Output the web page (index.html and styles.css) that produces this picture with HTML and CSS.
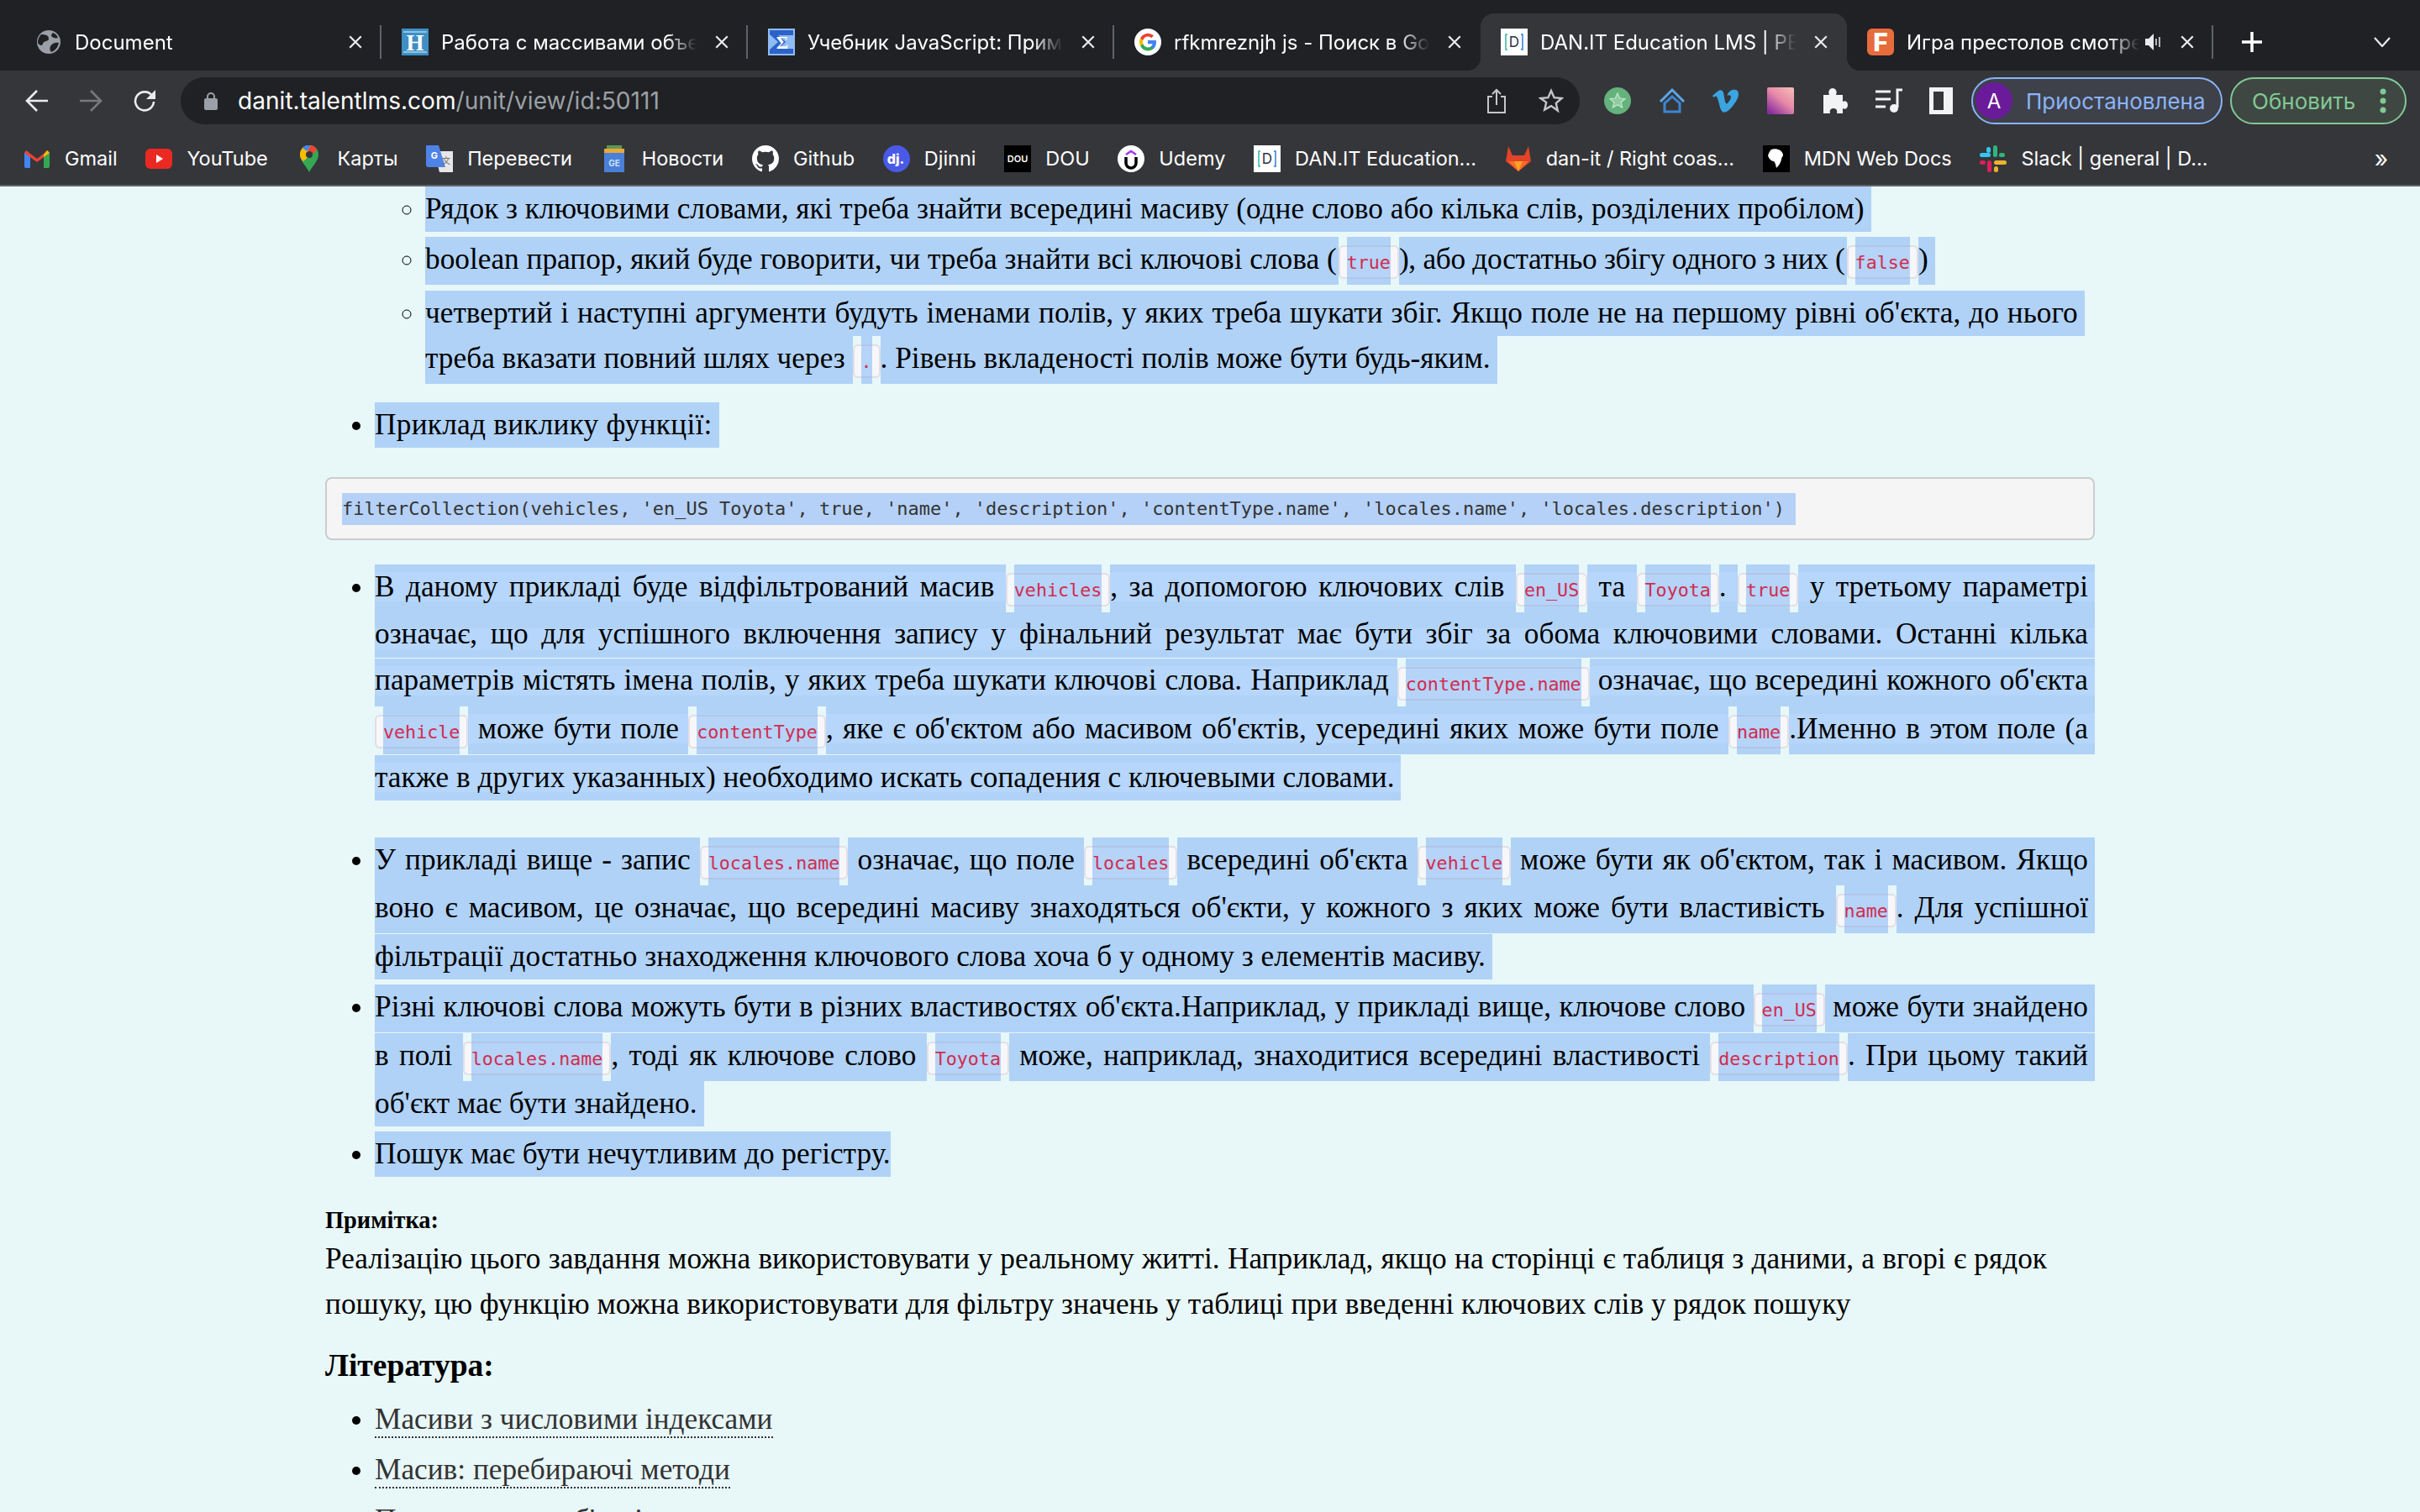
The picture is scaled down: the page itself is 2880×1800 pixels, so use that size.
FILE: index.html
```html
<!DOCTYPE html>
<html lang="uk">
<head>
<meta charset="utf-8">
<title>DAN.IT Education LMS</title>
<link rel="stylesheet" href="styles.css">
</head>
<body>
<svg class="defs" width="0" height="0" aria-hidden="true">
  <symbol id="close" viewBox="0 0 16 16"><path d="M2 2l12 12M14 2L2 14" fill="none" stroke="#e8eaed" stroke-width="2"/></symbol>
  <symbol id="dan" viewBox="0 0 32 32"><rect width="32" height="32" fill="#fff"/><path d="M8 7H6v18h2" fill="none" stroke="#2fb8a8" stroke-width="1.5"/><path d="M24 7h2v18h-2" fill="none" stroke="#2f7de1" stroke-width="1.5"/><text x="16" y="22" text-anchor="middle" font-family="Inter" font-size="17" fill="#2a3244">D</text></symbol>
</svg>
<header class="chrome">
  <div class="tabstrip">
    <div class="tab">
      <svg class="fav" viewBox="0 0 32 32"><circle cx="16" cy="16" r="14" fill="#9aa0a6"/><path d="M7 7c5 0 9 1 9 5s-6 2-7 6-5 1-6-1c0-4 1-7 4-10zM18 21c2-3 5-5 10-4-1 5-4 9-9 11-2-2-2-5-1-7zM21 5c3 1 5 3 6 6-3 1-6 0-8-2 0-2 1-3 2-4z" fill="#202124"/></svg>
      <span class="tab-title">Document</span>
      <svg class="tab-x"><use href="#close"/></svg>
    </div>
    <div class="tab">
      <svg class="fav" viewBox="0 0 32 32"><rect width="32" height="32" fill="#3f8fc4"/><path d="M2 4h28M2 28h28" stroke="#8cc4e6" stroke-width="2"/><text x="16" y="26" text-anchor="middle" font-family="Liberation Serif" font-weight="700" font-size="27" fill="#fff">H</text></svg>
      <span class="tab-title">Работа с массивами объекто</span>
      <svg class="tab-x"><use href="#close"/></svg>
    </div>
    <div class="tab">
      <svg class="fav" viewBox="0 0 32 32"><rect width="32" height="32" fill="#8fbcf2"/><path d="M2 2h28v6H12l9 8-9 8h18v6H2v-5l10-9L2 7z" fill="#2d63c8"/><text x="17" y="24" text-anchor="middle" font-family="Liberation Serif" font-weight="700" font-size="22" fill="#fff">Σ</text></svg>
      <span class="tab-title">Учебник JavaScript: Примеры</span>
      <svg class="tab-x"><use href="#close"/></svg>
    </div>
    <div class="tab tab-before-active">
      <svg class="fav" viewBox="0 0 32 32"><circle cx="16" cy="16" r="16" fill="#fff"/><path d="M26 16.3c0-.8-.1-1.500-.2-2.200H16v4.200h5.600a4.800 4.800 0 0 1-2.100 3.100v2.600h3.400c2-1.800 3.100-4.500 3.100-7.700z" fill="#4285f4"/><path d="M16 26.500c2.800 0 5.200-.9 6.900-2.500l-3.400-2.600c-.9.600-2.100 1-3.500 1-2.700 0-5-1.800-5.800-4.300H7.100v2.700A10.500 10.500 0 0 0 16 26.500z" fill="#34a853"/><path d="M10.200 18.100a6.300 6.300 0 0 1 0-4.100v-2.700H7.100a10.500 10.500 0 0 0 0 9.500z" fill="#fbbc05"/><path d="M16 9.600c1.500 0 2.900.5 4 1.600l3-3A10.500 10.500 0 0 0 7.100 11.300l3.100 2.700c.8-2.500 3.100-4.400 5.800-4.400z" fill="#ea4335"/></svg>
      <span class="tab-title">rfkmreznjh js - Поиск в Google</span>
      <svg class="tab-x"><use href="#close"/></svg>
    </div>
    <div class="tab tab-active">
      <svg class="fav"><use href="#dan"/></svg>
      <span class="tab-title">DAN.IT Education LMS | PE Adva</span>
      <svg class="tab-x"><use href="#close"/></svg>
    </div>
    <div class="tab">
      <svg class="fav" viewBox="0 0 32 32"><rect width="32" height="32" rx="6" fill="#e66c3c"/><text x="16" y="27" text-anchor="middle" font-family="Inter" font-weight="800" font-size="30" fill="#fff">F</text></svg>
      <span class="tab-title">Игра престолов смотреть</span>
      <svg class="speaker" viewBox="0 0 20 24"><path d="M1 8h4l6-6v20l-6-6H1z" fill="#e8eaed"/><path d="M14 8v8M18 6v12" stroke="#e8eaed" stroke-width="1.500"/></svg>
      <svg class="tab-x"><use href="#close"/></svg>
    </div>
    <svg class="newtab" viewBox="0 0 24 24"><path d="M12 0v24M0 12h24" stroke="#fff" stroke-width="3.500"/></svg>
    <svg class="tabchev" viewBox="0 0 20 12"><path d="M1 1l9 10 9-10" fill="none" stroke="#e8eaed" stroke-width="2.200"/></svg>
  </div>

  <div class="toolbar">
    <svg class="nav" viewBox="0 0 28 26"><path d="M27 13H3M14 1L2 13l12 12" fill="none" stroke="#e8eaed" stroke-width="2.600"/></svg>
    <svg class="nav" viewBox="0 0 28 26"><path d="M1 13h24M14 1l12 12-12 12" fill="none" stroke="#77797c" stroke-width="2.600"/></svg>
    <svg class="nav" viewBox="0 0 28 26"><path d="M23 7a11 11 0 1 0 2 7" fill="none" stroke="#e8eaed" stroke-width="2.600"/><path d="M27 0v11H16z" fill="#e8eaed"/></svg>
    <div class="omni">
      <svg class="lock" viewBox="0 0 16 22"><path d="M4 9V6a4 4 0 0 1 8 0v3" fill="none" stroke="#9aa0a6" stroke-width="2"/><rect y="8" width="16" height="14" rx="2" fill="#9aa0a6"/></svg>
      <span class="url"><span class="url-host">danit.talentlms.com</span>/unit/view/id:50111</span>
      <svg class="omni-share" viewBox="0 0 24 30"><path d="M7 10H2v19h20V10h-5M12 20V2M7 7l5-5 5 5" fill="none" stroke="#c4c7ca" stroke-width="2"/></svg>
      <svg class="omni-star" viewBox="0 0 30 30"><path d="M15 3l3.600 8.200 8.900.8-6.700 5.900 2 8.700L15 21.100l-7.800 4.500 2-8.700L2.500 12l8.900-.8z" fill="none" stroke="#c4c7ca" stroke-width="2.400"/></svg>
    </div>
    <div class="exts">
      <svg class="ext" viewBox="0 0 32 32"><circle cx="16" cy="16" r="16" fill="#64b27c"/><path d="M16 7l2.700 6 6.300.6-4.800 4.200 1.500 6.200-5.700-3.300L10.300 24l1.500-6.200L7 13.600l6.300-.6z" fill="#8ecb9f" stroke="#c7e6cf" stroke-width="1.200"/></svg>
      <svg class="ext" viewBox="0 0 32 32"><path d="M2 17L16 3l14 14" fill="none" stroke="#5aa7ea" stroke-width="3"/><path d="M7 29V19l9-8 9 8v10z" fill="none" stroke="#3d86d0" stroke-width="3"/></svg>
      <svg class="ext" viewBox="0 0 32 32"><path d="M31 9c-.2 3-2.300 7.200-6.400 12.500C20.400 27 16.800 29.700 13.900 29.700c-1.800 0-3.400-1.700-4.600-5l-2.500-9.200C5.900 12.200 4.900 10.500 3.900 10.500c-.2 0-1 .5-2.400 1.400L0 10c1.500-1.300 3-2.700 4.500-4C6.500 4.300 8 3.300 9 3.200c2.400-.2 3.900 1.400 4.400 4.800.6 3.700 1 6 1.200 6.900.7 3.100 1.500 4.600 2.300 4.600.6 0 1.600-1 2.900-3 1.300-2 2-3.600 2.100-4.600.2-1.700-.5-2.600-2.100-2.600-.7 0-1.500.2-2.300.5C19 4.900 22 2.700 26.400 2.800c3.300.1 4.800 2.200 4.600 6.200z" fill="#3aa5e0"/></svg>
      <svg class="ext" viewBox="0 0 32 32"><defs><linearGradient id="pk" x1="1" y1="0" x2="0.200" y2="1"><stop offset="0" stop-color="#f5c0b8"/><stop offset=".5" stop-color="#e88aa8"/><stop offset="1" stop-color="#8a2fa0"/></linearGradient></defs><rect width="32" height="32" rx="2" fill="url(#pk)"/></svg>
      <svg class="ext" viewBox="0 0 32 32"><path d="M3 9h7c-2-5 1-8 4-8s6 3 4 8h8v8c4-2 6 1 6 4s-2 6-6 4v6h-7c1-4-1-6-4-6s-5 2-4 6H3z" fill="#f1f3f4"/></svg>
      <svg class="ext" viewBox="0 0 32 32"><path d="M0 5h18M0 14h18M0 23h12" stroke="#f1f3f4" stroke-width="3"/><path d="M26 24V3h6" fill="none" stroke="#f1f3f4" stroke-width="3"/><circle cx="22" cy="25" r="5" fill="#f1f3f4"/></svg>
      <svg class="ext ext-side" viewBox="0 0 28 32"><path d="M0 0h28v32H0z" fill="#f1f3f4"/><path d="M5 5h12v22H5z" fill="#35363a"/></svg>
    </div>
    <div class="profile"><span class="avatar">A</span><span>Приостановлена</span></div>
    <div class="update"><span>Обновить</span><svg class="dots" viewBox="0 0 8 30"><circle cx="4" cy="4" r="3.500"/><circle cx="4" cy="15" r="3.500"/><circle cx="4" cy="26" r="3.500"/></svg></div>
  </div>

  <div class="bookmarks">
    <div class="bm"><svg class="bi" viewBox="0 0 32 32"><path d="M1 27V9l4-2 3 4v16H3a2 2 0 0 1-2-2z" fill="#4285f4"/><path d="M24 27V11l3-4 4 2v16a2 2 0 0 1-2 2z" fill="#34a853"/><path d="M1 9l15 11L31 9l-2-3-13 10L3 6z" fill="#ea4335"/><path d="M24 11l4-5 3 3-7 5z" fill="#fbbc04"/></svg><span>Gmail</span></div>
    <div class="bm"><svg class="bi" viewBox="0 0 32 32"><rect y="4" width="32" height="24" rx="6" fill="#ea2a22"/><path d="M13 11l8 5-8 5z" fill="#fff"/></svg><span>YouTube</span></div>
    <div class="bm"><svg class="bi" viewBox="0 0 22 32"><path d="M11 32C8 25 0 19 0 11a11 11 0 0 1 22 0c0 8-8 14-11 21z" fill="#34a853"/><path d="M3 3a11 11 0 0 1 17 2L4 19C1 16 0 14 0 11c0-3 1-6 3-8z" fill="#fbbc04"/><path d="M3 3a11 11 0 0 1 10-3L8 7z" fill="#4285f4"/><path d="M13 0a11 11 0 0 1 7 5l-5 6-6-5z" fill="#ea4335"/><circle cx="11" cy="11" r="4" fill="#35363a"/></svg><span>Карты</span></div>
    <div class="bm"><svg class="bi" viewBox="0 0 32 32"><path d="M10 7h22v25H16z" fill="#e6e6e6"/><path d="M0 0h15l8 26H3a3 3 0 0 1-3-3z" fill="#4e83e8"/><text x="10" y="16" text-anchor="middle" font-family="Inter" font-weight="700" font-size="11" fill="#fff">G</text><text x="24" y="22" text-anchor="middle" font-family="Noto Sans CJK SC" font-size="10" fill="#666">文</text></svg><span>Перевести</span></div>
    <div class="bm"><svg class="bi" viewBox="0 0 28 32"><rect x="5" y="0" width="18" height="8" fill="#5c9a4d"/><path d="M2 4h24v6H2z" fill="#e8a93a"/><rect x="2" y="9" width="24" height="23" fill="#4a80d8"/><text x="14" y="25" text-anchor="middle" font-family="Inter" font-weight="700" font-size="10" fill="#cfe0fa">GE</text></svg><span>Новости</span></div>
    <div class="bm"><svg class="bi" viewBox="0 0 16 16"><path fill="#fff" d="M8 0C3.580 0 0 3.580 0 8c0 3.540 2.290 6.530 5.470 7.590.4.070.55-.17.55-.38 0-.19-.01-.82-.01-1.490-2.010.37-2.530-.49-2.690-.94-.09-.23-.48-.94-.82-1.130-.28-.15-.68-.52-.01-.53.63-.01 1.080.58 1.230.82.72 1.210 1.870.87 2.330.66.070-.52.28-.87.51-1.070-1.780-.2-3.640-.89-3.640-3.950 0-.87.31-1.590.82-2.150-.08-.2-.36-1.020.08-2.120 0 0 .67-.21 2.200.82.64-.18 1.320-.27 2-.27.68 0 1.360.09 2 .27 1.530-1.040 2.200-.82 2.200-.82.44 1.100.16 1.920.08 2.120.51.56.82 1.270.82 2.150 0 3.070-1.870 3.750-3.650 3.950.29.25.54.73.54 1.480 0 1.070-.01 1.930-.01 2.200 0 .21.15.46.55.38A8.013 8.013 0 0016 8c0-4.420-3.580-8-8-8z"/></svg><span>Github</span></div>
    <div class="bm"><svg class="bi" viewBox="0 0 32 32"><circle cx="16" cy="16" r="16" fill="#4a5ae8"/><text x="15" y="22" text-anchor="middle" font-family="Inter" font-weight="800" font-size="16" fill="#fff">dj.</text></svg><span>Djinni</span></div>
    <div class="bm"><svg class="bi" viewBox="0 0 32 32"><rect width="32" height="32" fill="#000"/><text x="16" y="20" text-anchor="middle" font-family="Inter" font-weight="600" font-size="11" fill="#fff">DOU</text></svg><span>DOU</span></div>
    <div class="bm"><svg class="bi" viewBox="0 0 32 32"><circle cx="16" cy="16" r="16" fill="#fff"/><path d="M10 11l6-4 6 4" fill="none" stroke="#a435f0" stroke-width="2.500"/><path d="M10 14v7a6 6 0 0 0 12 0v-7" fill="none" stroke="#000" stroke-width="3.500"/></svg><span>Udemy</span></div>
    <div class="bm"><svg class="bi"><use href="#dan"/></svg><span>DAN.IT Education...</span></div>
    <div class="bm"><svg class="bi" viewBox="0 0 32 32"><path d="M16 31L1 19l3-18 5 11h14l5-11 3 18z" fill="#e24329"/><path d="M16 31L4 19h8zM16 31l12-12h-8z" fill="#fc6d26"/><path d="M16 31l-5-12h10z" fill="#fca326"/></svg><span>dan-it / Right coas...</span></div>
    <div class="bm"><svg class="bi" viewBox="0 0 32 32"><rect width="32" height="32" fill="#000"/><path d="M10 5c6-2 13 1 14 6 0 3-2 3-2 6-1 4-3 7-6 10-1-4-1-6-3-8-3 0-6-3-7-7 1-3 2-5 4-7z" fill="#fff"/></svg><span>MDN Web Docs</span></div>
    <div class="bm"><svg class="bi" viewBox="0 0 32 32"><g fill="#36c5f0"><rect y="9" width="13" height="5" rx="2.500"/><rect x="8" y="2" width="5" height="7" rx="2.500"/></g><g fill="#2eb67d"><rect x="16" width="5" height="14" rx="2.500"/><rect x="23" y="9" width="7" height="5" rx="2.500"/></g><g fill="#e01e5a"><rect x="9" y="18" width="5" height="14" rx="2.500"/><rect y="18" width="7" height="5" rx="2.500"/></g><g fill="#ecb22e"><rect x="17" y="18" width="15" height="5" rx="2.500"/><rect x="17" y="25" width="5" height="7" rx="2.500"/></g></svg><span>Slack | general | D...</span></div>
    <span class="bm-more">»</span>
  </div>
</header>

<main class="page">
  <ul class="list">
    <li class="nested-holder">
      <ul class="sub">
        <li><div class="ln fit h54">Рядок з ключовими словами, які треба знайти всередині масиву (одне слово або кілька слів, розділених пробілом)</div></li>
        <li class="mt6"><div class="ln fit h57">boolean прапор, який буде говорити, чи треба знайти всі ключові слова (<span class="chip chip-near"><code>true</code></span><span class="tight">), або достатньо збігу одного з них (</span><span class="chip chip-near"><code>false</code></span>)</div></li>
        <li class="mt7"><div class="ln fit h54 wide">четвертий і наступні аргументи будуть іменами полів, у яких треба шукати збіг. Якщо поле не на першому рівні об'єкта, до нього</div>
        <div class="ln fit h57">треба вказати повний шлях через <span class="chip"><code>.</code></span>. Рівень вкладеності полів може бути будь-яким.</div></li>
      </ul>
    </li>
    <li class="mt22"><div class="ln fit h54 airy">Приклад виклику функції:</div></li>
  </ul>

  <pre class="codeblock"><span class="pre-sel">filterCollection(vehicles, 'en_US Toyota', true, 'name', 'description', 'contentType.name', 'locales.name', 'locales.description') </span></pre>

  <ul class="list">
    <li><div class="ln just band h66">В даному прикладі буде відфільтрований масив <span class="chip"><code>vehicles</code></span>, за допомогою ключових слів <span class="chip"><code>en_US</code></span> та <span class="chip"><code>Toyota</code></span>. <span class="chip"><code>true</code></span> у третьому параметрі</div>
    <div class="ln just band h45 lh34">означає, що для успішного включення запису у фінальний результат має бути збіг за обома ключовими словами. Останні кілька</div>
    <div class="ln just band h57 lh52 mt1">параметрів містять імена полів, у яких треба шукати ключові слова. Наприклад <span class="chip"><code>contentType.name</code></span> означає, що всередині кожного об'єкта</div>
    <div class="ln just band h57"><span class="chip"><code>vehicle</code></span> може бути поле <span class="chip"><code>contentType</code></span>, яке є об'єктом або масивом об'єктів, усередині яких може бути поле <span class="chip"><code>name</code></span>.Именно в этом поле (а</div>
    <div class="ln full band h54 mt1">также в других указанных) необходимо искать сопадения с ключевыми словами.</div></li>
    <li class="mt44"><div class="ln just h57">У прикладі вище - запис <span class="chip"><code>locales.name</code></span> означає, що поле <span class="chip"><code>locales</code></span> всередині об'єкта <span class="chip"><code>vehicle</code></span> може бути як об'єктом, так і масивом. Якщо</div>
    <div class="ln just h57">воно є масивом, це означає, що всередині масиву знаходяться об'єкти, у кожного з яких може бути властивість <span class="chip"><code>name</code></span>. Для успішної</div>
    <div class="ln full h54 mt1">фільтрації достатньо знаходження ключового слова хоча б у одному з елементів масиву.</div></li>
    <li class="mt6"><div class="ln just h57">Різні ключові слова можуть бути в різних властивостях об'єкта.Наприклад, у прикладі вище, ключове слово <span class="chip"><code>en_US</code></span> може бути знайдено</div>
    <div class="ln just h57 mt1">в полі <span class="chip"><code>locales.name</code></span>, тоді як ключове слово <span class="chip"><code>Toyota</code></span> може, наприклад, знаходитися всередині властивості <span class="chip"><code>description</code></span>. При цьому такий</div>
    <div class="ln fit h54">об'єкт має бути знайдено.</div></li>
    <li class="mt6"><div class="ln fit h54 flush">Пошук має бути нечутливим до регістру.</div></li>
  </ul>

  <h6 class="note-title">Примітка:</h6>
  <p class="note"><span class="note-first">Реалізацію цього завдання можна використовувати у реальному житті. Наприклад, якщо на сторінці є таблиця з даними, а вгорі є рядок</span><br>пошуку, цю функцію можна використовувати для фільтру значень у таблиці при введенні ключових слів у рядок пошуку</p>
  <h4 class="lit-title">Література:</h4>
  <ul class="list links">
    <li><a>Масиви з числовими індексами</a></li>
    <li><a>Масив: перебираючі методи</a></li>
    <li><a>Перетворення об'єктів</a></li>
  </ul>
</main>
</body>
</html>
```

FILE: styles.css
```css
* { box-sizing: border-box; }
html, body { margin: 0; height: 1800px; overflow: hidden; }
body { display: flex; flex-direction: column; background: #e8f7f8; color: #000; }
.defs { display: block; height: 0; }

/* browser chrome */
.chrome { flex: none; font-family: Inter, sans-serif; color: #e8eaed; }
.tabstrip { height: 84px; background: #202124; display: flex; align-items: flex-end; padding-left: 18px; }
.tab { position: relative; width: 436px; height: 68px; flex: none; display: flex; align-items: center; padding: 0 22px 0 24px; font-size: 24px; }
.tab::after { content: ""; position: absolute; right: 0; top: 14px; height: 40px; width: 2px; background: #5f6368; }
.tab-before-active::after, .tab-active::after { display: none; }
.tab-active { background: #35363a; border-radius: 16px 16px 0 0; }
.tab-active::before { content: ""; position: absolute; left: -16px; bottom: 0; width: 16px; height: 16px; background: radial-gradient(circle at 0 0, #202124 16px, #35363a 16.500px); }
.tab-active + .tab::before { content: ""; position: absolute; left: 0; bottom: 0; width: 16px; height: 16px; background: radial-gradient(circle at 100% 0, #202124 16px, #35363a 16.500px); }
.fav { width: 32px; height: 32px; flex: none; margin-right: 15px; }
.tab-title { flex: 1; min-width: 0; white-space: nowrap; overflow: hidden; color: #fff; -webkit-mask-image: linear-gradient(to left, transparent, #000 36px); mask-image: linear-gradient(to left, transparent, #000 36px); }
.tab-x { width: 18px; height: 18px; flex: none; margin-left: 21px; }
.speaker { width: 20px; height: 24px; flex: none; margin-left: 6px; margin-right: 1px; }
.newtab { width: 24px; height: 24px; flex: none; margin: 0 0 22px 34px; }
.tabchev { width: 20px; height: 12px; flex: none; margin: 0 0 28px 133px; }

.toolbar { height: 76px; background: #35363a; display: flex; align-items: center; padding: 0 0 4px 30px; }
.nav { width: 28px; height: 26px; flex: none; margin-right: 36px; }
.omni { width: 1665px; height: 56px; margin-left: -7px; border-radius: 28px; background: #202124; display: flex; align-items: center; padding: 0 19px 0 28px; flex: none; }
.lock { width: 16px; height: 22px; flex: none; margin-right: 24px; }
.url { flex: 1; font-size: 28.100px; color: #9aa0a6; }
.url-host { color: #fff; }
.omni-share { width: 24px; height: 30px; margin-right: 38px; flex: none; }
.omni-star { width: 30px; height: 30px; flex: none; }
.exts { display: flex; align-items: center; gap: 32.500px; margin-left: 29px; flex: none; }
.ext { width: 32px; height: 32px; flex: none; }
.ext-side { width: 28px; }
.profile { margin-left: 22px; height: 56px; width: 299px; flex: none; border: 2px solid #8ab4f8; border-radius: 28px; background: #3e4149; color: #8ab4f8; display: flex; align-items: center; padding-left: 3px; gap: 16px; font-size: 26px; }
.avatar { width: 44px; height: 44px; border-radius: 50%; background: #6a1b9a; color: #fff; display: flex; align-items: center; justify-content: center; font-size: 24px; flex: none; }
.update { margin-left: 9px; height: 56px; width: 210px; flex: none; border: 2px solid #81c995; border-radius: 28px; background: #3f4742; color: #81c995; display: flex; align-items: center; padding-left: 24px; font-size: 26px; }
.dots { width: 8px; height: 30px; margin-left: 29px; fill: #81c995; }

.bookmarks { height: 62px; background: #35363a; border-bottom: 2px solid #5f6368; display: flex; align-items: center; padding: 0 0 3px 28px; font-size: 23.500px; color: #fff; white-space: nowrap; }
.bm { display: flex; align-items: center; margin-right: 33.700px; flex: none; }
.bi { width: 32px; height: 32px; flex: none; margin-right: 17px; }
.bm-more { margin-left: auto; margin-right: 38px; font-size: 28px; }

/* page */
.page { flex: 1; min-height: 0; overflow: hidden; padding-left: 387px; width: 2493px; font-family: "Liberation Serif", serif; font-size: 35.300px; line-height: 54px; }
.list { margin: 0; padding: 0 0 0 59px; list-style: disc; }
.sub { margin: 0; padding: 0 0 0 60px; list-style: circle; }
.nested-holder { list-style: none; }
.ln { background: #b0d2f7; line-height: 54px; white-space: nowrap; padding-right: 8px; }
.just { white-space: normal; text-align: justify; text-align-last: justify; }
.fit, .full { width: fit-content; }
.wide { word-spacing: 1.100px; }
.airy { letter-spacing: .25px; }
.flush { padding-right: 0; }
.tight { letter-spacing: -.3px; }
.band { background: linear-gradient(#b0d2f7 9px, #b6d6fb 9px, #b6d6fb 44px, #b0d2f7 44px); }
.h45 { height: 45px; } .h54 { height: 54px; } .h57 { height: 57px; } .h66 { height: 66px; }
.lh34 { line-height: 34px; background: linear-gradient(#b0d2f7 10px, #b6d6fb 10px, #b6d6fb 36px, #b0d2f7 36px); }
.lh52 { line-height: 52px; }
.mt1 { margin-top: 1px; } .mt6 { margin-top: 6px; } .mt7 { margin-top: 7px; } .mt22 { margin-top: 22px; } .mt44 { margin-top: 44px; }

.chip { display: inline-block; vertical-align: top; height: 57px; padding-top: 10px; background: linear-gradient(to right, #e8f7f8 10px, transparent 10px, transparent calc(100% - 10px), #e8f7f8 calc(100% - 10px)); }
.chip-near { margin-left: 2px; }
.chip code { display: block; height: 40px; padding: 0 8px; border: 2px solid rgba(170,160,185,.28); border-radius: 6px; background: linear-gradient(to right, #f7f7f9 10px, #b6d3f8 10px, #b6d3f8 calc(100% - 10px), #f7f7f9 calc(100% - 10px)); background-origin: border-box; font-family: "DejaVu Sans Mono", monospace; font-size: 21.700px; line-height: 37px; color: #d12c4f; }

.codeblock { margin: 35px 0 29px; height: 75px; border: 2px solid #ccc; border-radius: 8px; background: #f5f5f5; padding: 17px 18px; font-family: "DejaVu Sans Mono", monospace; font-size: 21.940px; line-height: 38px; color: #333; overflow: hidden; }
.pre-sel { display: inline-block; height: 38px; background: #b5d1f7; }

.note-title { margin: 33px 0 0; font-size: 28.400px; line-height: 38px; font-weight: 700; }
.note { margin: 0; }
.note-first { word-spacing: .45px; }
.lit-title { margin: 19px 0 0; font-size: 37.500px; line-height: 54px; font-weight: 700; }
.links { margin-top: 10px; color: #333; }
.links li { height: 60px; line-height: 54px; }
.links li::marker { color: #000; }
.links a { color: #333; padding-bottom: 1px; border-bottom: 2px dotted #333; }
```
